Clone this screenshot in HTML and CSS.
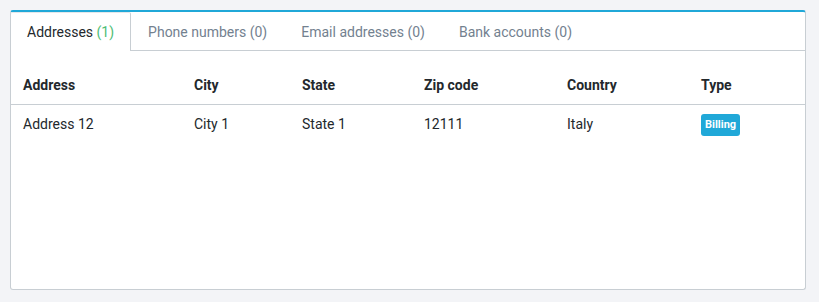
FILE: index.html
```html
<!DOCTYPE html>
<html lang="en">
<head>
    <meta charset="UTF-8">
    <meta name="viewport" content="width=device-width, initial-scale=1.0">
    <title>Contacts</title>
    <link rel="stylesheet" href="styles.css">
</head>
<body>
    <main class="card">
        <nav class="tabs">
            <a class="tab active" href="#">Addresses&nbsp;<span class="count">(1)</span></a>
            <a class="tab" href="#">Phone numbers (0)</a>
            <a class="tab" href="#">Email addresses (0)</a>
            <a class="tab" href="#">Bank accounts (0)</a>
        </nav>
        <section class="pane">
            <table class="list">
                <thead>
                    <tr>
                        <th class="c-address">Address</th>
                        <th class="c-city">City</th>
                        <th class="c-state">State</th>
                        <th class="c-zip">Zip code</th>
                        <th class="c-country">Country</th>
                        <th>Type</th>
                    </tr>
                </thead>
                <tbody>
                    <tr>
                        <td>Address 12</td>
                        <td>City 1</td>
                        <td>State 1</td>
                        <td>12111</td>
                        <td>Italy</td>
                        <td><span class="badge">Billing</span></td>
                    </tr>
                </tbody>
            </table>
        </section>
    </main>
</body>
</html>
```

FILE: styles.css
```css
body {
    margin: 0;
    padding: 10px 13px 12px 10px;
    background-color: #f3f4f7;
    font-family: Roboto, "Liberation Sans", sans-serif;
    font-size: 14px;
    color: #23282c;
}

.card {
    height: 277px;
    background-color: white;
    border: 1px solid #c8ced3;
    border-top: 2px solid #20a8d8;
    border-radius: 3px;
    display: flex;
    flex-direction: column;
}

.tabs {
    display: flex;
    border-bottom: 1px solid #c8ced3;
    height: 38px;
}
.tab {
    display: flex;
    align-items: center;
    padding: 0 16px;
    color: #73818f;
    text-decoration: none;
    border: 1px solid transparent;
    border-bottom: none;
    margin-bottom: -1px;
    line-height: 18px;
}
.tab.active {
    color: #23282c;
    background-color: white;
    border-color: #c8ced3;
    border-top-color: #e4e7ea;
    border-radius: 2px 2px 0 0;
    margin-left: -1px;
}
.count {
    color: #4dbd74;
}

.pane {
    padding-top: 15px;
}
.list {
    width: 100%;
    border-collapse: collapse;
}
.list th,
.list td {
    text-align: left;
    padding: 10px 12px;
    line-height: 18px;
    vertical-align: middle;
}
.list th {
    font-weight: bold;
    border-bottom: 1px solid #c8ced3;
}
.c-address { width: 147px; }
.c-city { width: 84px; }
.c-state { width: 98px; }
.c-zip { width: 119px; }
.c-country { width: 110px; }

.badge {
    display: inline-block;
    vertical-align: middle;
    margin: -3px 0 -2px;
    background-color: #20a8d8;
    color: white;
    font-size: 11px;
    font-weight: bold;
    line-height: 14px;
    padding: 4px 4px;
    border-radius: 3px;
}
```
